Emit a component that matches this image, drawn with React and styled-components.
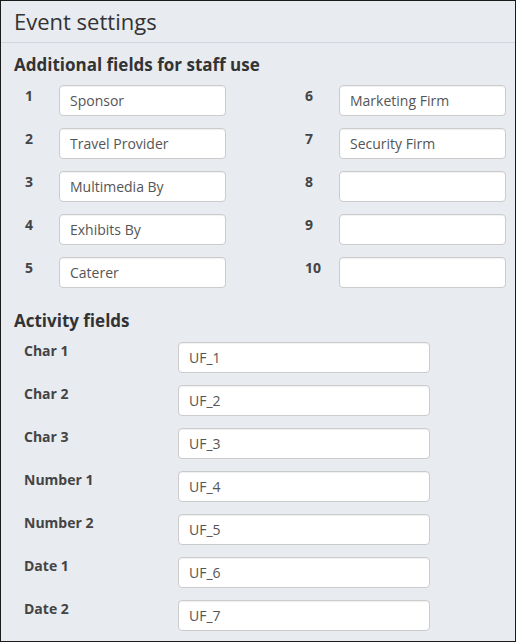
import React from "react";
import styled, { createGlobalStyle } from "styled-components";

const Global = createGlobalStyle`
  html, body { margin: 0; padding: 0; background: #fff; }
  * { box-sizing: border-box; }
`;

const Panel = styled.div`
  width: 516px;
  height: 642px;
  border: 1px solid #1b1b1b;
  background: #e8ebf0;
  font-family: "Open Sans", "Liberation Sans", sans-serif;
  color: #333;
  overflow: hidden;
`;

const Header = styled.div`
  height: 42px;
  padding: 6px 13px 0;
  border-bottom: 1px solid #d3d7dd;
  font-size: 22px;
  line-height: 28px;
  font-weight: 400;
  color: #333;
`;

const Body = styled.div`
  padding: 0 13px;
`;

const SectionTitle = styled.h2`
  margin: ${(p) => p.$top}px 0 0;
  font-size: 17px;
  line-height: 22px;
  font-weight: 700;
  color: #333;
`;

const StaffGrid = styled.div`
  margin-top: 9px;
  display: grid;
  grid-template-columns: repeat(2, 280px);
  grid-template-rows: repeat(5, 31px);
  grid-auto-flow: column;
  row-gap: 12px;
`;

const ActivityList = styled.div`
  margin-top: 10px;
  display: flex;
  flex-direction: column;
  gap: 12px;
`;

const Row = styled.div`
  display: flex;
  align-items: flex-start;
`;

const Label = styled.label`
  flex: none;
  width: ${(p) => p.$width}px;
  padding-left: ${(p) => p.$indent}px;
  padding-top: ${(p) => p.$top || 0}px;
  font-size: 14px;
  line-height: 16px;
  font-weight: 700;
  color: #444;
`;

const Input = styled.input`
  flex: none;
  width: ${(p) => p.$width}px;
  height: 31px;
  margin: 0;
  padding: 0 10px;
  border: 1px solid #cbcbcb;
  border-radius: 4px;
  background: #fff;
  box-shadow: inset 0 1px 1px rgba(0, 0, 0, 0.06);
  font-family: "Open Sans", "Liberation Sans", sans-serif;
  font-size: 14px;
  color: #555;
  outline: none;
`;

const staff = [
  "Sponsor",
  "Travel Provider",
  "Multimedia By",
  "Exhibits By",
  "Caterer",
  "Marketing Firm",
  "Security Firm",
  "",
  "",
  "",
];

const activity = [
  ["Char 1", "UF_1"],
  ["Char 2", "UF_2"],
  ["Char 3", "UF_3"],
  ["Number 1", "UF_4"],
  ["Number 2", "UF_5"],
  ["Date 1", "UF_6"],
  ["Date 2", "UF_7"],
];

export default function App() {
  return (
    <>
      <Global />
      <Panel>
        <Header>Event settings</Header>
        <Body>
          <SectionTitle $top={11}>Additional fields for staff use</SectionTitle>
          <StaffGrid>
            {staff.map((v, i) => (
              <Row key={i}>
                <Label $width={45} $indent={11} $top={3}>
                  {i + 1}
                </Label>
                <Input $width={167} defaultValue={v} readOnly />
              </Row>
            ))}
          </StaffGrid>
          <SectionTitle $top={22}>Activity fields</SectionTitle>
          <ActivityList>
            {activity.map(([l, v]) => (
              <Row key={l}>
                <Label $width={164} $indent={10} $top={1}>
                  {l}
                </Label>
                <Input $width={252} defaultValue={v} readOnly />
              </Row>
            ))}
          </ActivityList>
        </Body>
      </Panel>
    </>
  );
}
